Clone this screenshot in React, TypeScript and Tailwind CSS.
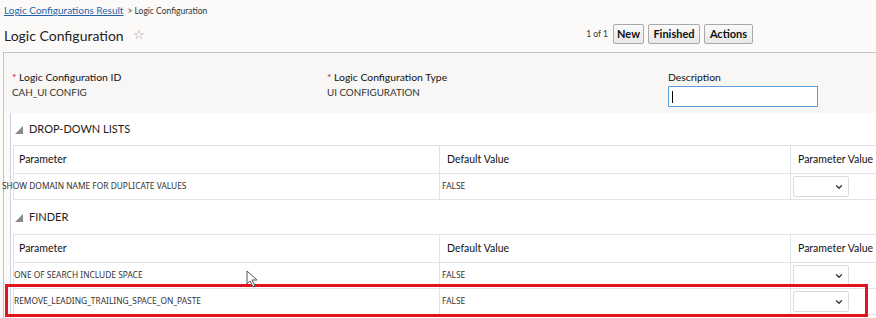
import { ChevronDown } from 'lucide-react';

type Row = { name: string; value: string; shift?: boolean };

const DROPDOWN_ROWS: Row[] = [
    { name: 'SHOW DOMAIN NAME FOR DUPLICATE VALUES', value: 'FALSE', shift: true },
];

const FINDER_ROWS: Row[] = [
    { name: 'ONE OF SEARCH INCLUDE SPACE', value: 'FALSE' },
    { name: 'REMOVE_LEADING_TRAILING_SPACE_ON_PASTE', value: 'FALSE' },
];

const BUTTONS = [
    { label: 'New', w: 'w-[31px]' },
    { label: 'Finished', w: 'w-[52px]' },
    { label: 'Actions', w: 'w-[49px]' },
];

function SectionTitle({ label, h }: { label: string; h: string }) {
    return (
        <div className={`flex items-center gap-[6px] pl-[4px] ${h}`}>
            <svg width="8" height="8" viewBox="0 0 8 8" className="mt-[2px]">
                <polygon points="8,0 8,8 0,8" fill="#8a8a8a" />
            </svg>
            <span className="text-[11px] text-[#222]">{label}</span>
        </div>
    );
}

function ParamTable({ rows }: { rows: Row[] }) {
    return (
        <div className="ml-[2px] border-l border-t border-[#dfe4ea]">
            <div className="grid grid-cols-[426px_351px_1fr] h-[28px] border-b border-[#dfe4ea] text-[10.5px] text-[#111] whitespace-nowrap">
                <div className="flex items-center pl-[5px] border-r border-[#dfe4ea]">Parameter</div>
                <div className="flex items-center pl-[7px] border-r border-[#dfe4ea]">Default Value</div>
                <div className="flex items-center pl-[7px]">Parameter Value</div>
            </div>
            {rows.map(r => (
                <div key={r.name} className="grid grid-cols-[426px_351px_1fr] h-[26px] border-b border-[#dfe4ea] text-[8.4px] text-[#333] font-['Noto_Sans',sans-serif]">
                    <div className={`flex items-center border-r border-[#dfe4ea] whitespace-nowrap ${r.shift ? '-ml-[12px]' : 'pl-[0px]'}`}>{r.name}</div>
                    <div className="flex items-center pl-[2px] border-r border-[#dfe4ea]">{r.value}</div>
                    <div className="flex items-center pl-[2px]">
                        <div className="w-[56px] h-[21px] bg-white border border-[#dcdcdc] rounded-[2px] flex items-center justify-end pr-[4px]">
                            <ChevronDown size={10} strokeWidth={3} className="text-[#333]" />
                        </div>
                    </div>
                </div>
            ))}
        </div>
    );
}

export default function App() {
    return (
        <div className="relative w-[876px] h-[318px] overflow-hidden bg-[#fbfaf9] font-['Lato','Noto_Sans',sans-serif]">
            {/* Header */}
            <header className="h-[52px] px-[4px]">
                <div className="flex items-baseline h-[20px] pt-[3px]">
                    <a className="text-[10px] text-[#1f63a6] underline">Logic Configurations Result</a>
                    <span className="text-[8.5px] text-[#333] ml-[4px]">&gt; Logic Configuration</span>
                </div>
                <div className="flex items-center h-[30px]">
                    <h1 className="text-[14px] text-[#222]">Logic Configuration</h1>
                    <span className="ml-[9px] text-[13px] text-[#999]">☆</span>
                    <div className="ml-auto mr-[119px] flex items-center gap-[4px] -mt-[2px]">
                        <span className="text-[8.5px] text-[#333] mr-[1px]">1 of 1</span>
                        {BUTTONS.map(b => (
                            <button
                                key={b.label}
                                className={`${b.w} h-[20px] text-[11px] font-bold text-[#111] bg-gradient-to-b from-[#fafafa] to-[#e8e8e8] border border-[#a8a8a8] rounded-[2px]`}
                            >
                                {b.label}
                            </button>
                        ))}
                    </div>
                </div>
            </header>

            {/* Main panel */}
            <main className="ml-[3px] border-l border-t border-[#c4c4c4]">
                <div className="h-[60px] bg-[#f8f7f6] grid grid-cols-[315px_341px_1fr] pl-[8px] pt-[17px]">
                    <div className="text-[10.4px] text-[#111] leading-[15px]">
                        <div><span className="text-[#d0141e]">*</span> Logic Configuration ID</div>
                        <div className="text-[9.8px] text-[#333]">CAH_UI CONFIG</div>
                    </div>
                    <div className="text-[10.4px] text-[#111] leading-[15px]">
                        <div><span className="text-[#d0141e]">*</span> Logic Configuration Type</div>
                        <div className="text-[9.8px] text-[#333]">UI CONFIGURATION</div>
                    </div>
                    <div className="text-[10.4px] text-[#111] leading-[15px]">
                        <div>Description</div>
                        <div className="mt-[1px] w-[150px] h-[21px] bg-white border border-[#5a9ee0] flex items-center pl-[3px]">
                            <div className="w-[1px] h-[12px] bg-black" />
                        </div>
                    </div>
                </div>

                <div className="ml-[6px] bg-white border-l border-[#c9d3e3] h-[206px]">
                    <SectionTitle label="DROP-DOWN LISTS" h="h-[32px]" />
                    <ParamTable rows={DROPDOWN_ROWS} />
                    <SectionTitle label="FINDER" h="h-[34px]" />
                    <ParamTable rows={FINDER_ROWS} />
                </div>
            </main>

            {/* Highlight annotation */}
            <div className="absolute left-[5px] top-[284px] w-[863px] h-[33px] border-[3px] border-[#e3141e]" />

            {/* Mouse cursor */}
            <svg className="absolute left-[246px] top-[270px]" width="13" height="18" viewBox="0 0 13 18">
                <path d="M1 1 L1 14 L4 11 L7 17 L9 16 L6 10 L11 10 Z" fill="white" stroke="#555" strokeWidth="1" />
            </svg>
        </div>
    );
}
